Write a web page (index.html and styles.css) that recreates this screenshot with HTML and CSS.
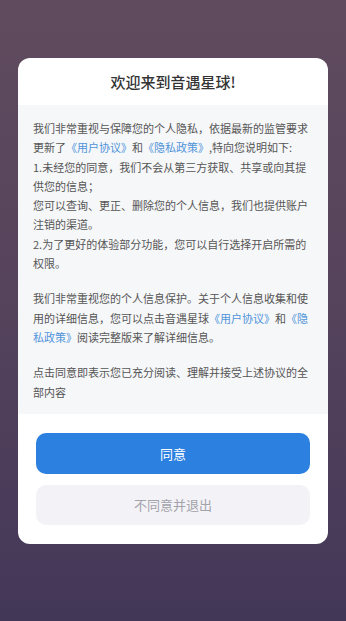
FILE: index.html
```html
<!DOCTYPE html>
<html lang="zh-CN">
<head>
<meta charset="utf-8">
<meta name="viewport" content="width=device-width, initial-scale=1">
<title>欢迎来到音遇星球</title>
<link rel="stylesheet" href="styles.css">
</head>
<body>
<div class="screen">
  <div class="dialog">
    <div class="dialog-header">欢迎来到音遇星球!</div>
    <div class="dialog-body">
      <p class="para">我们非常重视与保障您的个人隐私，依据最新的监管要求更新了<a class="link">《用户协议》</a>和<a class="link">《隐私政策》</a>,特向您说明如下:<br>1.未经您的同意，我们不会从第三方获取、共享或向其提供您的信息；<br>您可以查询、更正、删除您的个人信息，我们也提供账户注销的渠道。<br>2.为了更好的体验部分功能，您可以自行选择开启所需的权限。</p>
      <p class="para">我们非常重视您的个人信息保护。关于个人信息收集和使用的详细信息，您可以点击音遇星球<a class="link">《用户协议》</a>和<a class="link">《隐私政策》</a>阅读完整版来了解详细信息。</p>
      <p class="para">点击同意即表示您已充分阅读、理解并接受上述协议的全部内容</p>
    </div>
    <div class="dialog-footer">
      <button class="btn btn-primary">同意</button>
      <button class="btn btn-secondary">不同意并退出</button>
    </div>
  </div>
</div>
</body>
</html>
```

FILE: styles.css
```css
* {
  box-sizing: border-box;
}

html, body {
  margin: 0;
  padding: 0;
  height: 100%;
}

body {
  font-family: "Noto Sans CJK SC", "Noto Sans", sans-serif;
  background: linear-gradient(180deg, #604b5e 0%, #55435c 50%, #433758 100%);
  text-spacing-trim: space-all;
}

.screen {
  min-height: 621px;
  padding-top: 58px;
  display: flex;
  flex-direction: column;
  align-items: center;
}

.dialog {
  width: 310px;
  background: #ffffff;
  border-radius: 12px;
  overflow: hidden;
  display: flex;
  flex-direction: column;
}

.dialog-header {
  height: 47px;
  display: flex;
  align-items: center;
  justify-content: center;
  font-size: 15px;
  font-weight: 500;
  color: #333333;
}

.dialog-body {
  background: #f6f7f9;
  padding: 14px 15px 12px;
}

.para {
  margin: 0 0 16px;
  font-size: 11px;
  line-height: 19.3px;
  color: #555555;
  text-spacing-trim: space-all;
}

.para:last-child {
  margin-bottom: 0;
}

.link {
  color: #4f94d9;
  text-decoration: none;
}

.dialog-footer {
  padding: 19px 18px 19px;
  display: flex;
  flex-direction: column;
  gap: 11px;
}

.btn {
  border: none;
  border-radius: 10px;
  height: 41px;
  font-family: "Noto Sans CJK SC", "Noto Sans", sans-serif;
  font-size: 13px;
  cursor: pointer;
}

.btn-primary {
  background: #2b80e0;
  color: #ffffff;
}

.btn-secondary {
  height: 40px;
  background: #f3f2f7;
  color: #a3a3ab;
}
```
